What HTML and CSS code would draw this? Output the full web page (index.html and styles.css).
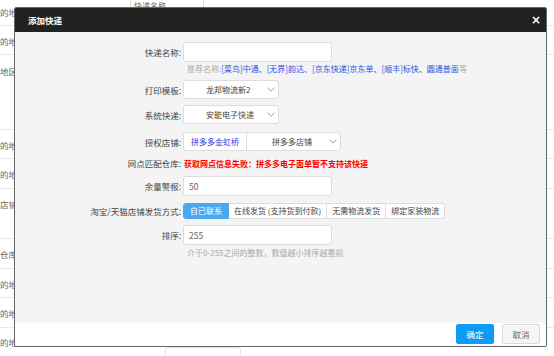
FILE: index.html
```html
<!DOCTYPE html>
<html lang="zh-CN">
<head>
  <meta charset="UTF-8">
  <title>添加快递</title>
  <link rel="stylesheet" href="styles.css">
</head>
<body>
<!-- 背景列表 -->
<div class="page">
  <div class="row r1">
    <span class="cell">的地区</span>
    <span class="search">快递名称</span>
  </div>
  <div class="row r2"><span class="cell">的地区</span></div>
  <div class="row r3"><span class="cell">地区</span></div>
  <div class="row r2"><span class="cell">的地区</span></div>
  <div class="row r4"><span class="cell">的地区</span></div>
  <div class="row r5"><span class="cell">店铺.</span></div>
  <div class="row r4"><span class="cell">仓库.</span></div>
  <div class="row r2"><span class="cell">的地</span></div>
  <div class="row r4"><span class="cell">的地</span></div>
  <div class="row r6">
    <span class="cell">的地</span>
    <span class="pager"></span>
  </div>
</div>

<!-- 弹窗 -->
<div class="layer">
  <div class="layer-title">
    <span>添加快递</span>
    <span class="close">×</span>
  </div>
  <div class="layer-body">
    <div class="item i1">
      <label>快递名称:</label>
      <div class="input"></div>
    </div>
    <div class="tip t1">推荐名称:<span class="blue">[菜鸟]中通、[无界]韵达、[京东快递]京东单、[顺丰]标快、圆通普面</span>等</div>

    <div class="item i2">
      <label>打印模板:</label>
      <div class="select">
        <span>龙邦物流新2</span>
        <svg width="8" height="5" viewBox="0 0 8 5"><polyline points="0.5,0.5 4,4.2 7.5,0.5" fill="none" stroke="#999" stroke-width="0.9"/></svg>
      </div>
    </div>

    <div class="item i3">
      <label>系统快递:</label>
      <div class="select">
        <span>安能电子快递</span>
        <svg width="8" height="5" viewBox="0 0 8 5"><polyline points="0.5,0.5 4,4.2 7.5,0.5" fill="none" stroke="#999" stroke-width="0.9"/></svg>
      </div>
    </div>

    <div class="item i4">
      <label>授权店铺:</label>
      <div class="shop">
        <span class="shop-name">拼多多金虹桥</span>
        <span class="shop-type">
          <span>拼多多店铺</span>
          <svg width="8" height="5" viewBox="0 0 8 5"><polyline points="0.5,0.5 4,4.2 7.5,0.5" fill="none" stroke="#999" stroke-width="0.9"/></svg>
        </span>
      </div>
    </div>

    <div class="item i5">
      <label>网点匹配仓库:</label>
      <span class="error">获取网点信息失败：拼多多电子面单暂不支持该快递</span>
    </div>

    <div class="item i6">
      <label>余量警报:</label>
      <div class="input">50</div>
    </div>

    <div class="item i7">
      <label>淘宝/天猫店铺发货方式:</label>
      <div class="btn-group">
        <span class="active">自已联系</span>
        <span>在线发货 (支持货到付款)</span>
        <span>无需物流发货</span>
        <span>绑定家装物流</span>
      </div>
    </div>

    <div class="item i8">
      <label>排序:</label>
      <div class="input">255</div>
    </div>
    <div class="tip t2">介于0-255之间的整数，数值越小排序越靠前</div>
  </div>
  <div class="layer-btn">
    <span class="ok">确定</span>
    <span class="cancel">取消</span>
  </div>
</div>
</body>
</html>
```

FILE: styles.css
```css
body {
  margin: 0;
  padding: 0;
  background-color: #FFF;
  font-family: "Noto Sans CJK SC", "Microsoft YaHei", sans-serif;
  font-size: 8.5px;
  color: #333;
  overflow: hidden;
}

/* 背景列表 */
.page {
  width: 554px;
}

.row {
  display: flex;
  align-items: flex-start;
  border-bottom: 1px solid #E8E8E8;
  box-sizing: border-box;
  color: #666;
  line-height: 14px;
}

.row .cell {
  width: 120px;
}

.r1 {
  height: 26px;
  padding-top: 5px;
}

.r2 {
  height: 29px;
  padding-top: 8px;
}

.r3 {
  height: 75px;
  padding-top: 9px;
}

.r4 {
  height: 30px;
  padding-top: 8px;
}

.r5 {
  height: 50px;
  padding-top: 8px;
}

.r6 {
  height: 30px;
  padding-top: 7px;
  border-bottom: none;
}

.search {
  margin-top: -5px;
  margin-left: 10px;
  width: 74px;
  height: 11px;
  padding-left: 3px;
  border: 1px solid #DDD;
  border-top: none;
  line-height: 11px;
  font-size: 8px;
  box-sizing: border-box;
}

.pager {
  margin-top: 12px;
  margin-left: 45px;
  width: 74px;
  height: 12px;
  border: 1px solid #E2E2E2;
  border-radius: 3px;
}

/* 弹窗 */
.layer {
  position: fixed;
  left: 14px;
  top: 7px;
  width: 533px;
  height: 340px;
  border: 1px solid #666;
  border-radius: 2px;
  background-color: #FFF;
  box-sizing: border-box;
  overflow: hidden;
  display: flex;
  flex-direction: column;
}

.layer-title {
  height: 24px;
  flex-shrink: 0;
  background-color: #222;
  color: #FFF;
  font-weight: bold;
  font-size: 8.5px;
  display: flex;
  align-items: center;
  justify-content: space-between;
  padding: 0 5px 0 13px;
}

.layer-title .close {
  font-size: 12px;
  font-family: "DejaVu Sans", sans-serif;
}

.layer-body {
  height: 291px;
  flex-shrink: 0;
  background-color: #F4F4F4;
  padding-top: 10px;
  box-sizing: border-box;
}

.item {
  display: flex;
  align-items: center;
}

.item label {
  width: 166px;
  padding-right: 2px;
  text-align: right;
  color: #444;
  flex-shrink: 0;
}

.i1 { height: 20px; }
.i2 { height: 19px; margin-top: 4px; }
.i3 { height: 19px; margin-top: 6px; }
.i4 { height: 19px; margin-top: 8px; }
.i5 { height: 14px; margin-top: 5px; }
.i6 { height: 20px; margin-top: 6px; }
.i7 { height: 16px; margin-top: 7px; }
.i8 { height: 20px; margin-top: 6px; }

.input {
  width: 149px;
  height: 20px;
  border: 1px solid #DDD;
  border-radius: 3px;
  background-color: #FFF;
  box-sizing: border-box;
  padding-left: 5px;
  line-height: 18px;
  color: #666;
}

.tip {
  padding-left: 172px;
  height: 14px;
  line-height: 14px;
  font-size: 8px;
  color: #AAA;
}

.t2 {
  margin-top: 1px;
}

.tip .blue {
  color: #2F4FE0;
}

.select {
  width: 96px;
  height: 19px;
  border: 1px solid #DDD;
  border-radius: 3px;
  background-color: #FFF;
  box-sizing: border-box;
  display: flex;
  align-items: center;
  justify-content: space-between;
  padding: 0 3px 0 22px;
  color: #444;
  font-size: 8px;
}

.shop {
  width: 158px;
  height: 19px;
  border: 1px solid #DDD;
  border-radius: 3px;
  background-color: #FFF;
  box-sizing: border-box;
  display: flex;
  font-size: 8px;
}

.shop-name {
  width: 63px;
  border-right: 1px solid #DDD;
  color: #3333E6;
  line-height: 17px;
  padding-left: 7px;
  box-sizing: border-box;
}

.shop-type {
  flex: 1;
  display: flex;
  align-items: center;
  justify-content: space-between;
  padding: 0 3px 0 25px;
  color: #444;
}

.error {
  color: #F00;
  font-weight: bold;
  font-size: 8px;
  padding-left: 1px;
}

.btn-group {
  display: flex;
  height: 16px;
  font-size: 8px;
}

.btn-group span {
  border: 1px solid #DDD;
  border-left: none;
  background-color: #FFF;
  padding: 0 5px;
  line-height: 14px;
  color: #444;
}

.btn-group span:first-child {
  border-left: 1px solid #DDD;
  border-radius: 3px 0 0 3px;
}

.btn-group span:last-child {
  border-radius: 0 3px 3px 0;
}

.btn-group .active {
  background-color: #4AA8F0;
  border-color: #4AA8F0;
  color: #FFF;
}

.btn-group span.active:first-child {
  border-left-color: #4AA8F0;
  padding: 0 6px;
}

.layer-btn {
  flex: 1;
  display: flex;
  justify-content: flex-end;
  align-items: flex-start;
  padding: 1px 6px 0 0;
  gap: 8px;
  font-size: 8.5px;
}

.layer-btn span {
  width: 38px;
  height: 20px;
  line-height: 18px;
  text-align: center;
  border: 1px solid #DDD;
  border-radius: 2px;
  box-sizing: border-box;
}

.layer-btn .ok {
  background-color: #0E9BF5;
  border-color: #0E9BF5;
  color: #FFF;
}

.layer-btn .cancel {
  background-color: #F5F5F5;
  color: #666;
}
```
